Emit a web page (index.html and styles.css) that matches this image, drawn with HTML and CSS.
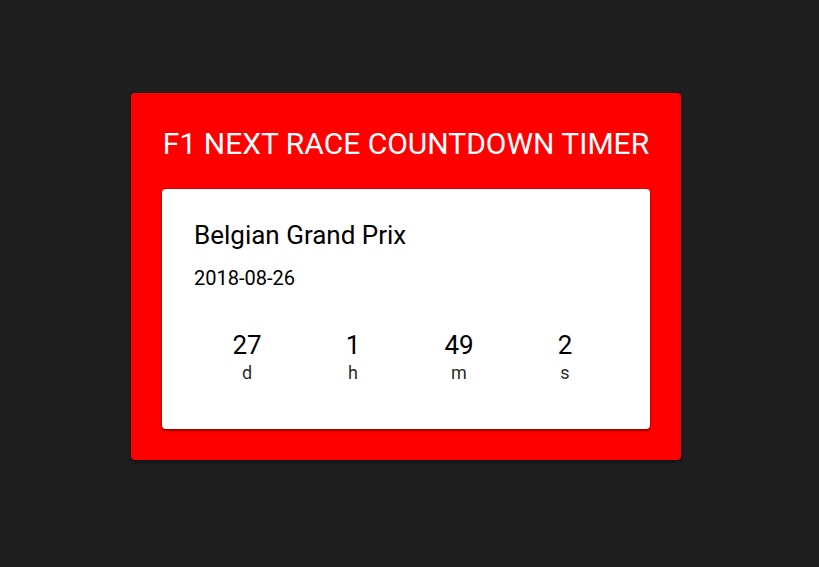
FILE: index.html
```html
<!DOCTYPE html>
<html lang="en">
<head>
<meta charset="utf-8">
<title>F1 Next Race Countdown Timer</title>
<link rel="stylesheet" href="styles.css">
</head>
<body>
<main class="page">
  <section class="timer">
    <h1 class="timer-title">F1 NEXT RACE COUNTDOWN TIMER</h1>
    <div class="race-card">
      <h2 class="race-name">Belgian Grand Prix</h2>
      <p class="race-date">2018-08-26</p>
      <div class="countdown">
        <div class="unit"><span class="unit-value">27</span><span class="unit-label">d</span></div>
        <div class="unit"><span class="unit-value">1</span><span class="unit-label">h</span></div>
        <div class="unit"><span class="unit-value">49</span><span class="unit-label">m</span></div>
        <div class="unit"><span class="unit-value">2</span><span class="unit-label">s</span></div>
      </div>
    </div>
  </section>
</main>
</body>
</html>
```

FILE: styles.css
```css
html, body {
  margin: 0;
  padding: 0;
  background: #1f1f1f;
  font-family: Roboto, "Liberation Sans", Arial, sans-serif;
}

.page {
  display: flex;
  align-items: flex-start;
  justify-content: flex-start;
  padding: 93px 0 0 131px;
  min-height: 567px;
  box-sizing: border-box;
}

.timer {
  width: 550px;
  box-sizing: border-box;
  background: #ff0000;
  border-radius: 4px;
  padding: 31px;
  box-shadow: 0 2px 4px rgba(0, 0, 0, 0.5);
}

.timer-title {
  margin: 2px 0 27px;
  font-size: 30px;
  line-height: 36px;
  font-weight: 400;
  color: #ffffff;
  text-align: center;
  white-space: nowrap;
}

.race-card {
  background: #ffffff;
  border-radius: 4px;
  padding: 32px 32px 46px;
  box-shadow: 0 2px 2px rgba(0, 0, 0, 0.3), 0 1px 5px rgba(0, 0, 0, 0.2);
}

.race-name {
  margin: 0;
  font-size: 26px;
  line-height: 28px;
  font-weight: 400;
  color: #000000;
}

.race-date {
  margin: 17px 0 0;
  font-size: 20px;
  line-height: 24px;
  color: #000000;
}

.countdown {
  margin-top: 40px;
  display: grid;
  grid-template-columns: repeat(4, 1fr);
}

.unit {
  display: flex;
  flex-direction: column;
  align-items: center;
}

.unit-value {
  font-size: 26px;
  line-height: 30px;
  color: #000000;
}

.unit-label {
  margin-top: 2px;
  font-size: 18px;
  line-height: 21px;
  color: rgba(0, 0, 0, 0.87);
}
```
